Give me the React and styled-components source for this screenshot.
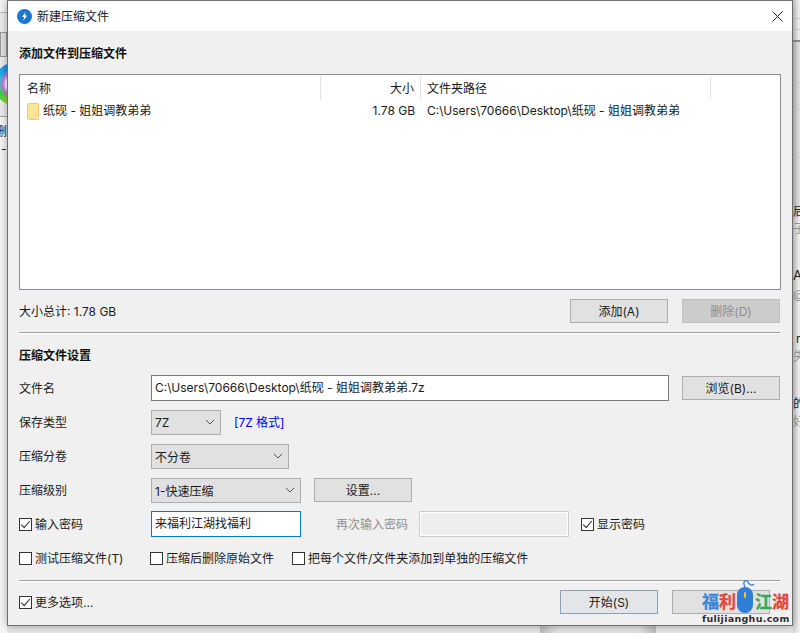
import React from "react";
import styled, { createGlobalStyle } from "styled-components";

const Global = createGlobalStyle`
  html, body { margin: 0; padding: 0; background: #e9e9e9; }
  body { font-family: Inter, "Noto Sans CJK SC", sans-serif; font-size: 12px; color: #1a1a1a; }
`;

const Desktop = styled.div`
  position: relative;
  width: 800px;
  height: 633px;
  overflow: hidden;
  background: #e8e8e8;
`;

const LeftStrip = styled.div`
  position: absolute;
  left: 0;
  top: 0;
  width: 7px;
  height: 633px;
  background: linear-gradient(#f4f4f4 12px, #b9b9b9 12px, #b9b9b9 13px, #ececec 13px, #ececec 116px, #a8a8a8 116px, #a8a8a8 117px, #f6f6f6 117px);
`;

const Wheel = styled.div`
  position: absolute;
  left: -6px;
  top: 62px;
  width: 44px;
  height: 44px;
  border-radius: 50%;
  background:
    radial-gradient(circle at 50% 50%, #ffffff 0 10px, #d070e0 13px, rgba(208, 112, 224, 0) 17px),
    conic-gradient(#3060f0, #e040c0 120deg, #f0e020 180deg, #40d040 235deg, #20d0e0 280deg, #2090f0 330deg, #3060f0);
`;

const TabEdge = styled.div`
  position: absolute;
  left: 0;
  top: 32px;
  width: 5px;
  height: 23px;
  border: 1px solid #999;
  background: #e4e4e4;
`;

const SideText = styled.span`
  position: absolute;
  left: ${(p) => p.$left}px;
  top: ${(p) => p.$top}px;
  font-size: ${(p) => p.$size || 12}px;
  line-height: 14px;
  color: ${(p) => p.$color || "#222"};
  white-space: nowrap;
`;

const RightStrip = styled.div`
  position: absolute;
  left: 793px;
  top: 0;
  width: 7px;
  height: 633px;
  background: linear-gradient(90deg, #d4d4d4, #f6f6f6);
`;

const RightBand = styled.div`
  position: absolute;
  left: 793px;
  top: ${(p) => p.$top}px;
  width: 7px;
  height: ${(p) => p.$height}px;
  background: ${(p) => p.$bg};
`;

const BottomCell = styled.div`
  position: absolute;
  left: 540px;
  top: 625px;
  width: 116px;
  height: 8px;
  background: linear-gradient(90deg, #bdbdbd, #e4e4e4 15%, #e4e4e4 85%, #bdbdbd);
`;

const Dialog = styled.div`
  position: absolute;
  left: 7px;
  top: 0;
  width: 784px;
  height: 624px;
  background: #f0f0f0;
  border: 1px solid #6e6e6e;
  border-top-color: #777;
  box-shadow: 0 0 8px rgba(0, 0, 0, 0.35);
  display: flex;
  flex-direction: column;
`;

const TitleBar = styled.div`
  height: 30px;
  background: #fff;
  display: flex;
  align-items: center;
  padding: 0 9px;
  gap: 6px;
  flex: none;
`;

const TitleText = styled.span`
  flex: 1;
  font-size: 12px;
  color: #222;
  margin-left: -1px;
  padding-bottom: 2px;
`;

const Body = styled.div`
  display: flex;
  flex-direction: column;
  padding: 0 8px 0 11px;
`;

const SectionTitle = styled.div`
  font-weight: 700;
  font-size: 12px;
  line-height: 16px;
  color: #111;
  margin-top: ${(p) => p.$top}px;
`;

const ListBox = styled.div`
  margin-top: 12px;
  width: 760px;
  height: 214px;
  background: #fff;
  border: 1px solid #8a8a98;
`;

const ListGrid = styled.div`
  display: grid;
  grid-template-columns: 301px 100px 290px 1fr;
`;

const HeadCell = styled.div`
  height: 24px;
  line-height: 25px;
  padding: 0 6px 0 ${(p) => (p.$right ? 0 : p.$tight ? 6 : 7)}px;
  margin-top: 1px;
  text-align: ${(p) => (p.$right ? "right" : "left")};
  border-right: ${(p) => (p.$last ? "none" : "1px solid #e3e3e3")};
`;

const RowCell = styled.div`
  height: 22px;
  line-height: 22px;
  padding: 0 6px 0 ${(p) => (p.$tight ? 6 : 7)}px;
  display: flex;
  align-items: center;
  justify-content: ${(p) => (p.$right ? "flex-end" : "flex-start")};
  gap: 4px;
  white-space: nowrap;
`;

const SummaryRow = styled.div`
  display: flex;
  align-items: center;
  height: 24px;
  margin-top: 9px;
  width: 761px;
`;

const TotalText = styled.span`
  padding-bottom: 2px;
`;

const Grow = styled.span`
  flex: 1;
`;

const EndGap = styled.span`
  width: 10px;
  flex: none;
`;

const Button = styled.button`
  width: 98px;
  height: 24px;
  margin-left: ${(p) => p.$ml || 0}px;
  padding: 0 0 1px;
  box-sizing: border-box;
  font: inherit;
  color: ${(p) => (p.$disabled ? "#8c8c8c" : "#1a1a1a")};
  background: ${(p) => (p.$disabled ? "#cccccc" : p.$primary ? "#e3e5e8" : "#e1e1e1")};
  border: 1px solid ${(p) => (p.$disabled ? "#bfbfbf" : p.$primary ? "#8aa2b8" : "#adadad")};
`;

const Separator = styled.div`
  width: 761px;
  height: 1px;
  background: #a0a0a0;
  box-shadow: 0 1px 0 #fff;
  margin-top: ${(p) => p.$top}px;
`;

const FormRow = styled.div`
  display: flex;
  align-items: center;
  height: 26px;
  margin-top: ${(p) => p.$top ?? 8}px;
`;

const Label = styled.span`
  width: 132px;
  flex: none;
  padding-bottom: 1px;
`;

const Field = styled.div`
  box-sizing: border-box;
  width: ${(p) => p.$w}px;
  height: 26px;
  line-height: 24px;
  padding: 0 3px;
  background: ${(p) => (p.$off ? "#eeeeee" : "#fff")};
  border: ${(p) => (p.$focus ? "1px solid #0078d7" : p.$off ? "1px solid #cdcdcd" : "1px solid #7a7a7a")};
  box-shadow: ${(p) => (p.$off ? "inset 0 0 0 1px #fff" : "none")};
  white-space: nowrap;
  overflow: hidden;
  flex: none;
`;

const Select = styled.div`
  box-sizing: border-box;
  width: ${(p) => p.$w}px;
  height: 25px;
  padding: 0 5px 0 3px;
  display: flex;
  align-items: center;
  justify-content: space-between;
  background: #e1e1e1;
  border: 1px solid #adadad;
  flex: none;
`;

const FormatLink = styled.span`
  margin-left: 13px;
  color: #0000ff;
  padding-bottom: 1px;
`;

const CheckWrap = styled.label`
  display: inline-flex;
  align-items: center;
  gap: 3px;
  width: ${(p) => (p.$w ? `${p.$w}px` : "auto")};
  margin-left: ${(p) => p.$ml || 0}px;
  flex: none;
  white-space: nowrap;
`;

const CheckText = styled.span`
  padding-bottom: 1px;
`;

const Box = styled.span`
  box-sizing: border-box;
  width: 13px;
  height: 13px;
  border: 1px solid #333;
  background: #fff;
  display: flex;
  align-items: center;
  justify-content: center;
  flex: none;
`;

const OffLabel = styled.span`
  margin-left: 35px;
  width: 83px;
  flex: none;
  color: #8f8f8f;
  white-space: nowrap;
  padding-bottom: 1px;
`;

const CloseButton = styled.span`
  display: flex;
  width: 11px;
  height: 11px;
`;

const Watermark = styled.div`
  position: absolute;
  left: 702px;
  top: 580px;
  width: 90px;
`;

const MarkTitle = styled.div`
  display: flex;
  align-items: flex-start;
  height: 34px;
  font-family: "Noto Sans CJK SC", sans-serif;
  font-weight: 700;
  font-size: 17px;
`;

const MarkChar = styled.span`
  color: ${(p) => p.$color};
  width: ${(p) => p.$w}px;
  line-height: 17px;
  margin-top: 12px;
  flex: none;
  -webkit-text-stroke: 0.3px ${(p) => p.$color};
`;

const MarkUrl = styled.div`
  font-family: "DejaVu Sans", sans-serif;
  font-weight: 700;
  font-size: 9.5px;
  letter-spacing: 0.3px;
  color: #2c2c2c;
  line-height: 10px;
  white-space: nowrap;
  text-shadow: 0 0 2px #fff;
`;

const AppLogo = () => (
  <svg width="15" height="15" viewBox="0 0 15 15">
    <circle cx="7.5" cy="7.5" r="7.5" fill="#1976d2" />
    <path d="M8.8 2.8 L5 8 H7.2 L6.2 12 L10.2 6.6 H7.9 Z" fill="#fff" />
  </svg>
);

const FolderIcon = () => (
  <svg width="12" height="17" viewBox="0 0 12 17">
    <rect x="0.5" y="0.5" width="11" height="16" rx="1" fill="#ffe39b" stroke="#f0c869" />
    <rect x="9" y="11.5" width="2.5" height="5" fill="#ffeec2" stroke="#f0c869" strokeWidth="0.7" />
  </svg>
);

const Chevron = () => (
  <svg width="10" height="6" viewBox="0 0 10 6">
    <path d="M0.8 0.8 L5 5 L9.2 0.8" fill="none" stroke="#555" strokeWidth="1" />
  </svg>
);

const Tick = () => (
  <svg width="11" height="11" viewBox="0 0 11 11">
    <path d="M1.2 5.6 L4.2 8.6 L9.8 2" fill="none" stroke="#333" strokeWidth="1.1" />
  </svg>
);

const Check = ({ checked, children, w, ml }) => (
  <CheckWrap $w={w} $ml={ml}>
    <Box>{checked && <Tick />}</Box>
    <CheckText>{children}</CheckText>
  </CheckWrap>
);

const MouseIcon = () => (
  <svg width="18" height="34" viewBox="0 0 18 34">
    <path d="M8 7 C5 1 9 -1 11 2 C12 5 15 6 17 4" fill="none" stroke="#2f7fd6" strokeWidth="1.3" />
    <rect x="0" y="7" width="16" height="26" rx="8" fill="#2f7fd6" />
    <rect x="7" y="12" width="2" height="6" rx="1" fill="#f2c230" />
  </svg>
);

export default function App() {
  return (
    <Desktop>
      <Global />
      <LeftStrip />
      <TabEdge />
      <Wheel />
      <SideText $left={-5} $top={125}>删</SideText>
      <SideText $left={1} $top={142}>-</SideText>
      <RightStrip />
      <RightBand $top={18} $height={1} $bg="#cfcfcf" />
      <RightBand $top={29} $height={1} $bg="#cfcfcf" />
      <RightBand $top={40} $height={2} $bg="#8f8f8f" />
      <RightBand $top={42} $height={172} $bg="linear-gradient(90deg,#c4c4c4,#e6e6e6)" />
      <RightBand $top={82} $height={1} $bg="#cfcfcf" />
      <RightBand $top={109} $height={1} $bg="#cfcfcf" />
      <RightBand $top={157} $height={1} $bg="#cfcfcf" />
      <SideText $left={793} $top={205}>后</SideText>
      <SideText $left={793} $top={222} $color="#999">子</SideText>
      <SideText $left={793} $top={268} $size={13}>A</SideText>
      <SideText $left={793} $top={288} $color="#999">@</SideText>
      <SideText $left={796} $top={332}>r</SideText>
      <SideText $left={793} $top={350} $color="#999">失</SideText>
      <SideText $left={793} $top={397}>的</SideText>
      <SideText $left={793} $top={415} $color="#999">好</SideText>
      <BottomCell />
      <Dialog>
        <TitleBar>
          <AppLogo />
          <TitleText>新建压缩文件</TitleText>
          <CloseButton>
            <svg width="11" height="11" viewBox="0 0 11 11">
              <path d="M0.5 0.5 L10.5 10.5 M10.5 0.5 L0.5 10.5" stroke="#222" strokeWidth="1" />
            </svg>
          </CloseButton>
        </TitleBar>
        <Body>
          <SectionTitle $top={15}>添加文件到压缩文件</SectionTitle>
          <ListBox>
            <ListGrid>
              <HeadCell>名称</HeadCell>
              <HeadCell $right>大小</HeadCell>
              <HeadCell $tight>文件夹路径</HeadCell>
              <HeadCell $last />
              <RowCell>
                <FolderIcon />
                纸砚 - 姐姐调教弟弟
              </RowCell>
              <RowCell $right>1.78 GB</RowCell>
              <RowCell $tight>C:\Users\70666\Desktop\纸砚 - 姐姐调教弟弟</RowCell>
              <RowCell />
            </ListGrid>
          </ListBox>
          <SummaryRow>
            <TotalText>大小总计: 1.78 GB</TotalText>
            <Grow />
            <Button>添加(A)</Button>
            <Button $disabled $ml={14}>删除(D)</Button>
          </SummaryRow>
          <Separator $top={9} />
          <SectionTitle $top={15}>压缩文件设置</SectionTitle>
          <FormRow $top={11}>
            <Label>文件名</Label>
            <Field $w={518}>C:\Users\70666\Desktop\纸砚 - 姐姐调教弟弟.7z</Field>
            <Button $ml={13}>浏览(B)...</Button>
          </FormRow>
          <FormRow>
            <Label>保存类型</Label>
            <Select $w={70}>7Z<Chevron /></Select>
            <FormatLink>[7Z 格式]</FormatLink>
          </FormRow>
          <FormRow>
            <Label>压缩分卷</Label>
            <Select $w={138}>不分卷<Chevron /></Select>
          </FormRow>
          <FormRow>
            <Label>压缩级别</Label>
            <Select $w={150}>1-快速压缩<Chevron /></Select>
            <Button $ml={13}>设置...</Button>
          </FormRow>
          <FormRow>
            <Check checked w={132}>输入密码</Check>
            <Field $w={150} $focus>来福利江湖找福利</Field>
            <OffLabel>再次输入密码</OffLabel>
            <Field $w={150} $off />
            <Check checked ml={12}>显示密码</Check>
          </FormRow>
          <FormRow $top={8}>
            <Check w={131}>测试压缩文件(T)</Check>
            <Check w={142}>压缩后删除原始文件</Check>
            <Check>把每个文件/文件夹添加到单独的压缩文件</Check>
          </FormRow>
          <Separator $top={9} />
          <SummaryRow>
            <Check checked>更多选项...</Check>
            <Grow />
            <Button $primary>开始(S)</Button>
            <Button $ml={14} aria-label="取消" />
            <EndGap />
          </SummaryRow>
        </Body>
      </Dialog>
      <Watermark>
        <MarkTitle>
          <MarkChar $color="#3b86d8" $w={17}>福</MarkChar>
          <MarkChar $color="#e4483c" $w={18}>利</MarkChar>
          <MouseIcon />
          <MarkChar $color="#35a85c" $w={17}>江</MarkChar>
          <MarkChar $color="#e4483c" $w={17}>湖</MarkChar>
        </MarkTitle>
        <MarkUrl>fulijianghu.com</MarkUrl>
      </Watermark>
    </Desktop>
  );
}
